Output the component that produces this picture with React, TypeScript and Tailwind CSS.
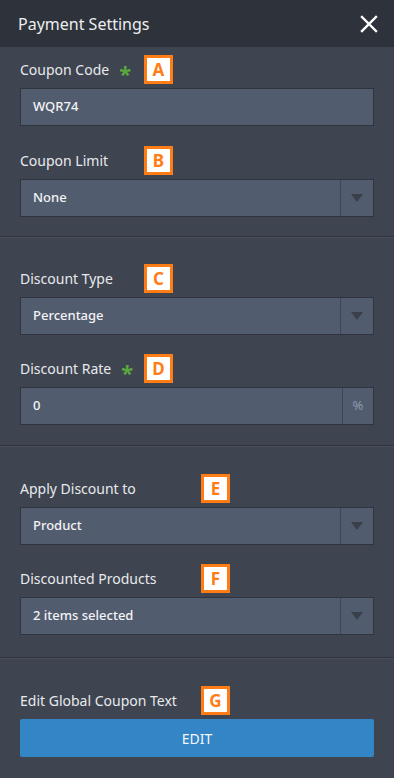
import React from 'react';

const font = { fontFamily: '"Noto Sans", "Open Sans", Arial, sans-serif' };

const Badge = ({ letter }: { letter: string }) => (
  <span className="flex h-[29px] w-[29px] items-center justify-center border-[3px] border-[#ff7d14] bg-white text-[17px] font-bold leading-none text-[#ff7d14]">
    {letter}
  </span>
);

const Asterisk = () => <span className="ml-[10px] mt-[6px] text-[22px] font-bold leading-none text-[#5aa93c]">*</span>;

interface LabelRowProps {
  label: string;
  letter: string;
  required?: boolean;
  badgeLeft: string;
}

const LabelRow: React.FC<LabelRowProps> = ({ label, letter, required, badgeLeft }) => (
  <div className="relative flex h-[29px] items-center">
    <span className="text-[14px] text-[#e8eaed]">{label}</span>
    {required && <Asterisk />}
    <div className={`absolute top-0 ${badgeLeft}`}>
      <Badge letter={letter} />
    </div>
  </div>
);

const Caret = () => (
  <svg width="12" height="8" viewBox="0 0 12 8">
    <path d="M0 0 L12 0 L6 8 Z" fill="#394049" />
  </svg>
);

const TextInput = ({ value }: { value: string }) => (
  <div className="mt-[4px] flex h-[38px] items-center border border-[#2f343d] bg-[#525c6f] px-[12px] text-[13px] font-medium text-[#f2f3f5]">
    {value}
  </div>
);

const Select = ({ value }: { value: string }) => (
  <div className="mt-[4px] flex h-[38px] border border-[#2f343d] bg-[#525c6f] text-[13px] font-medium text-[#f2f3f5]">
    <div className="flex flex-1 items-center px-[12px]">{value}</div>
    <div className="flex w-[33px] items-center justify-center border-l border-[#3e4553]">
      <Caret />
    </div>
  </div>
);

const Divider = () => (
  <div>
    <div className="h-px bg-[#2f343c]" />
    <div className="h-px bg-[#4a505b]" />
  </div>
);

export default function App() {
  return (
    <div className="h-[778px] w-[394px] overflow-hidden bg-[#3e4450]" style={font}>
      <div className="flex h-[47px] items-center justify-between bg-[#2e323a] pl-[18px] pr-[16px]">
        <span className="text-[16px] text-[#eceef0]">Payment Settings</span>
        <svg width="18" height="18" viewBox="0 0 18 18">
          <path d="M2 2 L16 16 M16 2 L2 16" stroke="#ffffff" strokeWidth="2.4" strokeLinecap="square" />
        </svg>
      </div>

      <div className="px-[20px] pt-[8px] pb-[19px]">
        <LabelRow label="Coupon Code" letter="A" required badgeLeft="left-[124px]" />
        <TextInput value="WQR74" />
        <div className="mt-[20px]">
          <LabelRow label="Coupon Limit" letter="B" badgeLeft="left-[124px]" />
          <Select value="None" />
        </div>
      </div>
      <Divider />

      <div className="px-[20px] pt-[26px] pb-[20px]">
        <LabelRow label="Discount Type" letter="C" badgeLeft="left-[124px]" />
        <Select value="Percentage" />
        <div className="mt-[19px]">
          <LabelRow label="Discount Rate" letter="D" required badgeLeft="left-[124px]" />
          <div className="mt-[4px] flex h-[38px] border border-[#2f343d] bg-[#525c6f] text-[13px] font-medium text-[#f2f3f5]">
            <div className="flex flex-1 items-center px-[12px]">0</div>
            <div className="flex w-[31px] items-center justify-center border-l border-[#3e4553] text-[13px] font-normal text-[#8f99aa]">
              %
            </div>
          </div>
        </div>
      </div>
      <Divider />

      <div className="px-[20px] pt-[27px] pb-[22px]">
        <LabelRow label="Apply Discount to" letter="E" badgeLeft="left-[181px]" />
        <Select value="Product" />
        <div className="mt-[19px]">
          <LabelRow label="Discounted Products" letter="F" badgeLeft="left-[181px]" />
          <Select value="2 items selected" />
        </div>
      </div>
      <Divider />

      <div className="px-[20px] pt-[27px]">
        <LabelRow label="Edit Global Coupon Text" letter="G" badgeLeft="left-[181px]" />
        <button className="mt-[4px] flex h-[38px] w-full items-center justify-center rounded-[2px] bg-[#3385c6] text-[14px] text-[#f3f7fb]">
          EDIT
        </button>
      </div>
    </div>
  );
}
